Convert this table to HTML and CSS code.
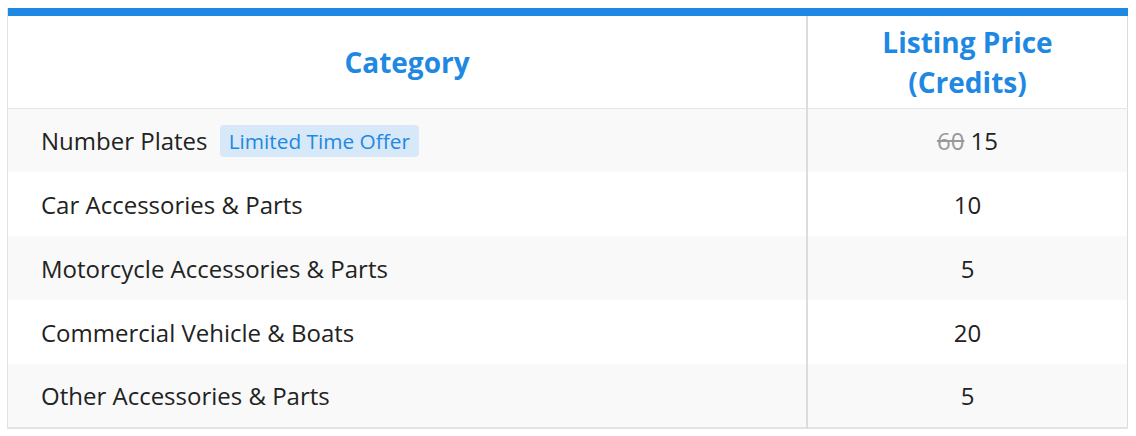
FILE: index.html
```html
<!DOCTYPE html>
<html>
<head>
<meta charset="utf-8">
<link rel="stylesheet" href="styles.css">
</head>
<body>
<div class="wrap">
  <table class="prices">
    <thead>
      <tr>
        <th class="col-cat">Category</th>
        <th class="col-price">Listing Price<br>(Credits)</th>
      </tr>
    </thead>
    <tbody>
      <tr>
        <td class="cat">Number Plates <span class="badge">Limited Time Offer</span></td>
        <td class="price"><s class="old">60</s> 15</td>
      </tr>
      <tr>
        <td class="cat">Car Accessories &amp; Parts</td>
        <td class="price">10</td>
      </tr>
      <tr>
        <td class="cat">Motorcycle Accessories &amp; Parts</td>
        <td class="price">5</td>
      </tr>
      <tr>
        <td class="cat">Commercial Vehicle &amp; Boats</td>
        <td class="price">20</td>
      </tr>
      <tr>
        <td class="cat">Other Accessories &amp; Parts</td>
        <td class="price">5</td>
      </tr>
    </tbody>
  </table>
</div>
</body>
</html>
```

FILE: styles.css
```css
html, body {
  margin: 0;
  padding: 0;
  background: #ffffff;
}
body {
  padding: 8px 8px 0 7px;
  font-family: "Open Sans", "Noto Sans", sans-serif;
  color: #222222;
}
.wrap {
  border-left: 1px solid #e3e3e3;
}
.prices {
  width: 1120px;
  border-collapse: collapse;
  border-top: 8px solid #1e88e2;
  border-right: 1px solid #dcdcdc;
  border-bottom: 2px solid #e3e3e3;
}
.prices th {
  font-weight: 700;
  color: #1e88e2;
  font-size: 28px;
  line-height: 40px;
  text-align: center;
  height: 96px;
  padding: 0;
  border-bottom: 1px solid #e6e6e6;
  box-sizing: border-box;
}
.col-cat {
  width: 799px;
}
.col-price {
  border-left: 2px solid #dcdcdc;
}
.prices td {
  height: 64px;
  padding: 0;
  font-size: 24px;
  box-sizing: border-box;
}
.prices tbody tr:nth-child(odd) td {
  background: #f9f9f9;
}
.cat {
  padding-left: 33px !important;
}
.price {
  text-align: center;
  border-left: 2px solid #dcdcdc;
}
.old {
  color: #999999;
}
.badge {
  display: inline-block;
  margin-left: 6px;
  padding: 0 9px;
  height: 32px;
  line-height: 32px;
  font-size: 20.8px;
  color: #1e88e2;
  background: #d7e9f8;
  border-radius: 4px;
  vertical-align: 1px;
}
```
